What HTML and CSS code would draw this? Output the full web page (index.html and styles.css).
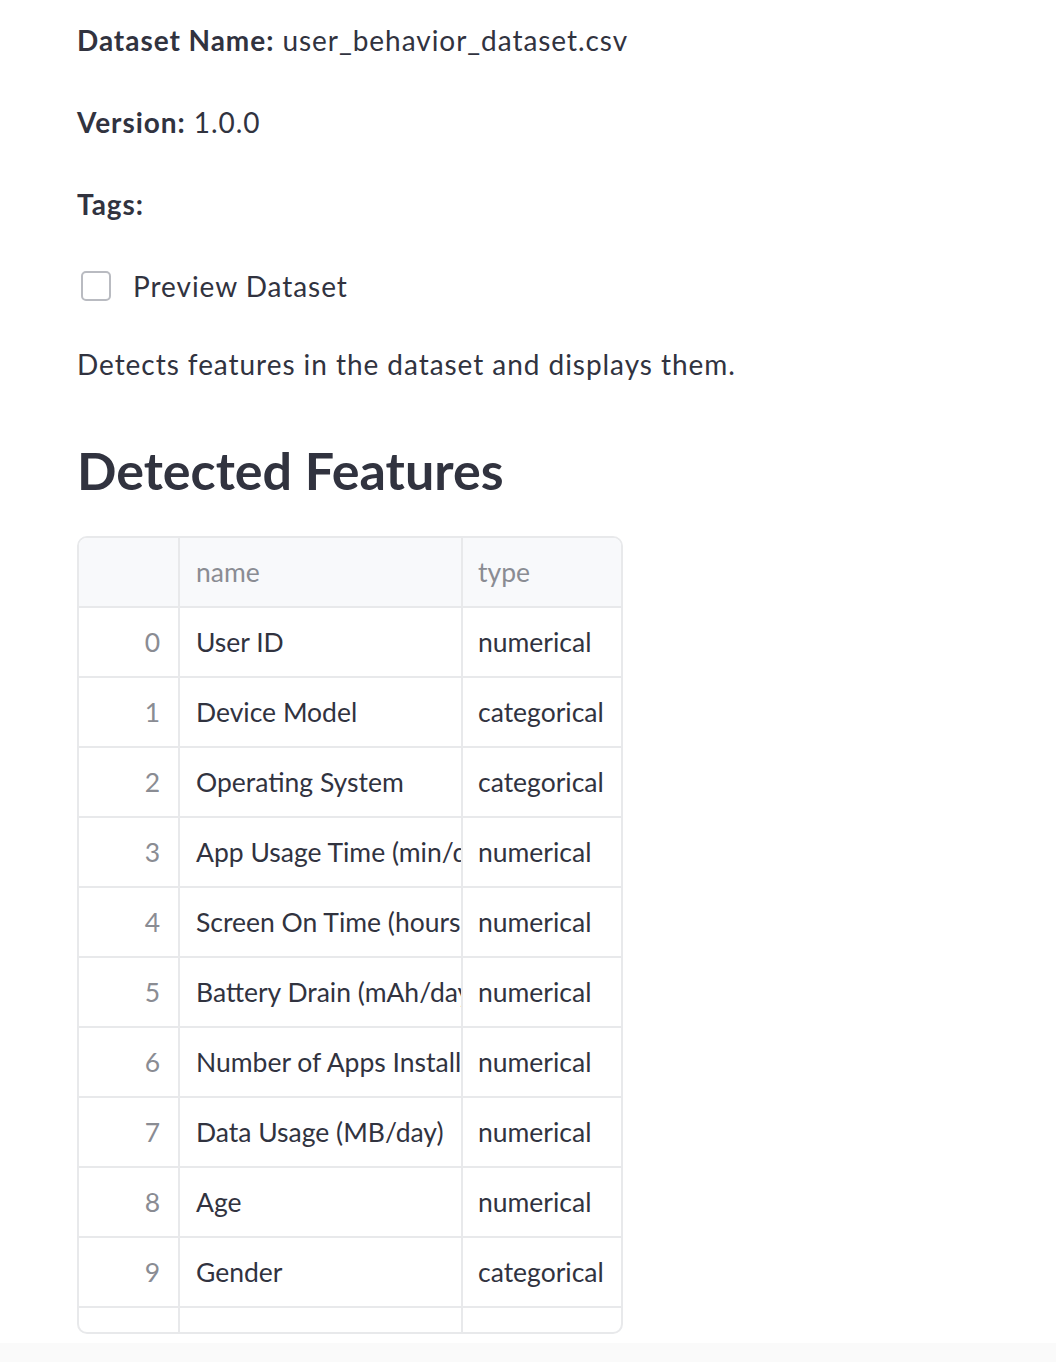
FILE: index.html
```html
<!DOCTYPE html>
<html lang="en">
<head>
<meta charset="utf-8">
<title>Dataset</title>
<link rel="stylesheet" href="styles.css">
</head>
<body>
<main class="page">
  <p class="meta"><strong>Dataset Name:</strong> user_behavior_dataset.csv</p>
  <p class="meta"><strong>Version:</strong> 1.0.0</p>
  <p class="meta"><strong>Tags:</strong></p>
  <label class="check">
    <span class="box"></span>
    <span class="check-label">Preview Dataset</span>
  </label>
  <p class="desc">Detects features in the dataset and displays them.</p>
  <h2 class="title">Detected Features</h2>
  <div class="grid">
    <div class="row head">
      <div class="cell idx"></div>
      <div class="cell">name</div>
      <div class="cell last">type</div>
    </div>
    <div class="row"><div class="cell idx">0</div><div class="cell">User ID</div><div class="cell last">numerical</div></div>
    <div class="row"><div class="cell idx">1</div><div class="cell">Device Model</div><div class="cell last">categorical</div></div>
    <div class="row"><div class="cell idx">2</div><div class="cell">Operating System</div><div class="cell last">categorical</div></div>
    <div class="row"><div class="cell idx">3</div><div class="cell">App Usage Time (min/day)</div><div class="cell last">numerical</div></div>
    <div class="row"><div class="cell idx">4</div><div class="cell">Screen On Time (hours/day)</div><div class="cell last">numerical</div></div>
    <div class="row"><div class="cell idx">5</div><div class="cell">Battery Drain (mAh/day)</div><div class="cell last">numerical</div></div>
    <div class="row"><div class="cell idx">6</div><div class="cell">Number of Apps Installed</div><div class="cell last">numerical</div></div>
    <div class="row"><div class="cell idx">7</div><div class="cell">Data Usage (MB/day)</div><div class="cell last">numerical</div></div>
    <div class="row"><div class="cell idx">8</div><div class="cell">Age</div><div class="cell last">numerical</div></div>
    <div class="row"><div class="cell idx">9</div><div class="cell">Gender</div><div class="cell last">categorical</div></div>
    <div class="row"><div class="cell idx">10</div><div class="cell">User Behavior Class</div><div class="cell last">numerical</div></div>
  </div>
</main>
<div class="footer-band"></div>
</body>
</html>
```

FILE: styles.css
```css
html, body {
  margin: 0;
  padding: 0;
  background: #ffffff;
}

body {
  font-family: "Lato", "Noto Sans", sans-serif;
  color: #31333f;
  font-size: 28px;
}

.page {
  padding: 18px 0 0 77px;
  height: 1343px;
  box-sizing: border-box;
}

.meta {
  margin: 0 0 38px;
  line-height: 44px;
  letter-spacing: 0.95px;
}

.meta strong {
  font-weight: 700;
}

.check {
  display: flex;
  align-items: center;
  height: 44px;
  margin-top: 0;
  padding-left: 4px;
  gap: 22px;
}

.check-label {
  letter-spacing: 0.95px;
}

.box {
  width: 30px;
  height: 30px;
  box-sizing: border-box;
  border: 2px solid #b9bbc1;
  border-radius: 5px;
  background: #fff;
}

.desc {
  margin: 34px 0 0;
  line-height: 44px;
  letter-spacing: 0.95px;
}

.title {
  margin: 50px 0 0;
  font-size: 52px;
  line-height: 68px;
  font-weight: 700;
}

.grid {
  margin-top: 32px;
  width: 546px;
  height: 798px;
  box-sizing: border-box;
  border: 2px solid #e8e9eb;
  border-radius: 10px;
  overflow: hidden;
  font-size: 26.5px;
}

.row {
  display: grid;
  grid-template-columns: 101px 283px 158px;
  height: 70px;
}

.cell {
  box-sizing: border-box;
  border-right: 2px solid #e8e9eb;
  border-bottom: 2px solid #e8e9eb;
  padding: 0 0 0 16px;
  display: flex;
  align-items: center;
  white-space: nowrap;
  overflow: hidden;
}

.cell.last {
  border-right: none;
  padding-left: 15px;
}

.cell.idx {
  justify-content: flex-end;
  padding: 0 18px 0 0;
  color: #8a8c93;
}

.head .cell {
  background: #f8f9fb;
  color: #8a8c93;
}

.footer-band {
  height: 19px;
  background: #fafafa;
}
```
